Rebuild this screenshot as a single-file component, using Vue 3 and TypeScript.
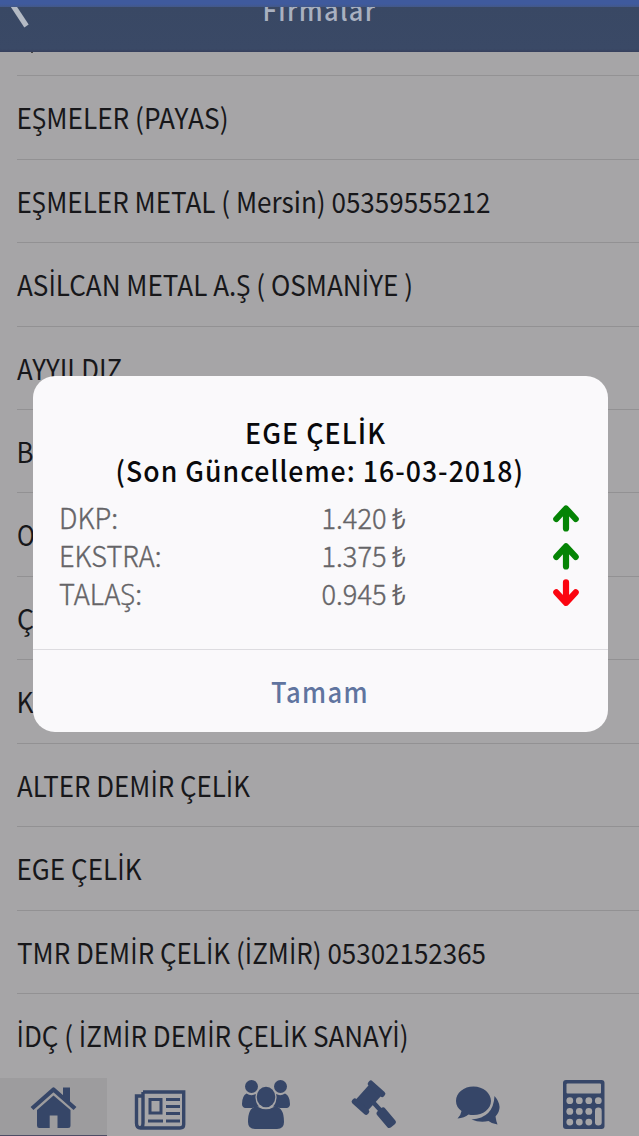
<script setup lang="ts">
interface Firm {
  name: string
  x: number
  width: number
}

interface Price {
  label: string
  labelWidth: number
  value: string
  up: boolean
}

const firms: Firm[] = [
  { name: 'EŞMELER (PAYAS)', x: 16.5, width: 212 },
  { name: 'EŞMELER METAL ( Mersin) 05359555212', x: 16.5, width: 474 },
  { name: 'ASİLCAN METAL A.Ş ( OSMANİYE )', x: 17, width: 396 },
  { name: 'AYYILDIZ', x: 17, width: 105 },
  { name: 'B', x: 16.5, width: 17 },
  { name: 'O', x: 17, width: 18 },
  { name: 'Ç', x: 17, width: 17 },
  { name: 'K', x: 16.5, width: 17 },
  { name: 'ALTER DEMİR ÇELİK', x: 17, width: 233 },
  { name: 'EGE ÇELİK', x: 16.5, width: 125 },
  { name: 'TMR DEMİR ÇELİK (İZMİR) 05302152365', x: 17, width: 469 },
  { name: 'İDÇ ( İZMİR DEMİR ÇELİK SANAYİ)', x: 16.5, width: 392 },
]

const prices: Price[] = [
  { label: 'DKP:', labelWidth: 59, value: '1.420', up: true },
  { label: 'EKSTRA:', labelWidth: 102.5, value: '1.375', up: true },
  { label: 'TALAŞ:', labelWidth: 83, value: '0.945', up: false },
]

const dialogTitle = 'EGE ÇELİK'

// The dotted capital İ is set from its own family, so runs are split around it.
const runs = (s: string): string[] => s.split(/(İ)/).filter((part) => part !== '')
</script>

<template>
  <div class="screen">
    <div class="status"></div>
    <header class="bar">
      <svg width="639" height="45" viewBox="0 7 639 45">
        <path d="M12 4 26.500 26" stroke="#b4bac4" stroke-width="5.200" fill="none" />
        <text x="262.500" y="21" class="title" textLength="114" lengthAdjust="spacingAndGlyphs">Firmalar</text>
      </svg>
    </header>

    <main class="list">
      <div class="stub"><i></i></div>
      <div v-for="firm in firms" :key="firm.name" class="row">
        <svg width="639" height="83" viewBox="0 0 639 83">
          <text :x="firm.x" y="52.600" :textLength="firm.width" lengthAdjust="spacingAndGlyphs"><tspan v-for="(part, i) in runs(firm.name)" :key="i" :class="{ dotted: part === 'İ' }">{{ part }}</tspan></text>
        </svg>
      </div>
    </main>

    <nav class="tabs">
      <div class="tab active">
        <svg width="107" height="58" viewBox="0 1078 107 58">
          <path d="M32 1108.500 53.500 1089.500 75 1108.500" fill="none" stroke="#364668" stroke-width="4.300" stroke-linejoin="round" />
          <path d="M63 1087.500H70V1103L63 1097Z" />
          <path d="M53.500 1095.500 70.500 1110V1125.500Q70.500 1128 68 1128H57.500V1115.500H49.700V1128H39.200Q37 1128 37 1125.500V1110Z" />
        </svg>
      </div>
      <div class="tab">
        <svg width="107" height="58" viewBox="107 1078 107 58">
          <g fill="none" stroke="#364668" stroke-width="3.400">
            <path d="M143 1092H183.700V1124.500Q183.700 1128 180 1128H140.500Q136.500 1128 136.500 1123V1096H143M143 1092V1123Q143 1128 139.500 1128" />
            <path d="M150 1099.500H161V1113H150ZM166 1099.500H180M166 1106.500H180M166 1113.500H180M166 1121H180M148 1121H163" stroke-width="3" />
          </g>
        </svg>
      </div>
      <div class="tab">
        <svg width="107" height="58" viewBox="213 1078 107 58">
          <circle cx="251.500" cy="1086.500" r="6.500" />
          <circle cx="280.500" cy="1086.500" r="6.500" />
          <path d="M246.500 1093.500Q251 1096.500 256 1094Q254.500 1102 259 1106.500Q254.500 1107 252 1108H245Q242 1107 242 1104Q242 1096 246.500 1093.500ZM285 1093.500Q280.500 1096.500 276 1094Q277.500 1102 273 1106.500Q277 1107 280 1108H287Q290 1107 290 1104Q290 1096 285 1093.500Z" />
          <ellipse cx="266" cy="1097" rx="10.400" ry="11.400" class="cut" />
          <ellipse cx="266" cy="1097" rx="9.300" ry="10.300" />
          <path d="M257 1106.500Q266 1112 275 1106.500Q284 1107 284 1122Q284 1129 277 1129H255Q248 1129 248 1122Q248 1107 257 1106.500Z" />
        </svg>
      </div>
      <div class="tab">
        <svg width="107" height="58" viewBox="319 1078 107 58">
          <g transform="translate(367.500 1097.700) rotate(-48)">
            <rect x="-12" y="-8.200" width="24" height="16.400" />
            <rect x="-15" y="-10.500" width="6" height="21" rx="2.400" />
            <rect x="9" y="-10.500" width="6" height="21" rx="2.400" />
          </g>
          <path d="M371 1101 381 1112" stroke="#364668" stroke-width="4.500" />
          <rect x="-10.500" y="-5.200" width="21" height="10.400" rx="2.800" transform="translate(385.200 1117.700) rotate(50)" />
        </svg>
      </div>
      <div class="tab">
        <svg width="107" height="58" viewBox="426 1078 107 58">
          <path d="M494.500 1096Q504 1107 495.500 1116.500Q496 1120.500 497.500 1124.500Q492 1124 488.500 1121Q480 1123 471.500 1119.500Q493.500 1118 494.500 1096Z" />
          <path d="M473.500 1086.500C463.800 1086.500 456 1092.700 456 1101Q456 1107 461.500 1111Q461 1115 457.500 1118.500Q464.500 1118 468.500 1114.500Q470.500 1115 473.500 1115C483.200 1115 491 1108.800 491 1101S483.200 1086.500 473.500 1086.500Z" />
        </svg>
      </div>
      <div class="tab">
        <svg width="107" height="58" viewBox="532 1078 107 58">
          <rect x="562" y="1080" width="41.500" height="49" rx="3" />
          <rect x="565.500" y="1083.500" width="34.500" height="10" rx="1" class="cut" />
          <g class="cut">
            <template v-for="r in 3" :key="r">
              <circle v-for="c in (r === 1 ? 4 : 3)" :key="c" :cx="559.3 + c * 9.5" :cy="1090 + r * 10.7" r="3.400" />
            </template>
            <rect x="594" y="1107.500" width="6.700" height="18" rx="3.200" />
          </g>
        </svg>
      </div>
    </nav>

    <section class="dialog">
      <svg width="575" height="273" viewBox="32.5 376 575 273">
        <g class="heading">
          <text x="244.500" y="444" textLength="141" lengthAdjust="spacingAndGlyphs"><tspan v-for="(part, i) in runs(dialogTitle)" :key="i" :class="{ dotted: part === 'İ' }">{{ part }}</tspan></text>
          <text x="115" y="481.500" textLength="408.500" lengthAdjust="spacingAndGlyphs">(Son Güncelleme: 16-03-2018)</text>
        </g>
        <g v-for="(p, i) in prices" :key="p.label" class="price" :transform="`translate(0 ${i * 37.9})`">
          <text x="58.500" y="529" :textLength="p.labelWidth" lengthAdjust="spacingAndGlyphs">{{ p.label }}</text>
          <text x="321" y="529" textLength="65" lengthAdjust="spacingAndGlyphs">{{ p.value }}</text>
          <text x="391.300" y="529" class="lira" textLength="14" lengthAdjust="spacingAndGlyphs">₺</text>
          <path
            :class="p.up ? 'up' : 'down'"
            :d="p.up ? 'M565.5 528.5V509M555.800 519 565.5 508.500 575.200 519' : 'M565.5 506.500V527M555.800 516.500 565.5 527 575.200 516.500'"
          />
        </g>
      </svg>
      <button type="button" class="ok">
        <svg width="575" height="83" viewBox="32.5 649 575 83">
          <text x="270.500" y="702.500" textLength="98" lengthAdjust="spacingAndGlyphs">Tamam</text>
        </svg>
      </button>
    </section>
  </div>
</template>

<style>
body {
  margin: 0;
  background: #a6a5a7;
}
</style>

<style scoped>
.screen {
  position: relative;
  width: 639px;
  height: 1136px;
  overflow: hidden;
  display: flex;
  flex-direction: column;
  background: #a6a5a7;
  font-family: "Noto Sans CJK SC", "Open Sans", sans-serif;
}
svg {
  display: block;
}
.status {
  height: 7px;
  flex: none;
  background: linear-gradient(#3f5a9d 4px, #435888);
}
.bar {
  height: 45px;
  flex: none;
  background: linear-gradient(#394864, #3a4966 42px, #363f5c);
}
.title {
  font-size: 28px;
  font-weight: 500;
  letter-spacing: 1.5px;
  fill: #a9b1c0;
}
.list {
  flex: 1;
  min-height: 0;
  overflow: hidden;
}
.stub {
  height: 23.2px;
  margin-left: 17px;
  border-bottom: 1px solid #939294;
}
.stub i {
  display: block;
  width: 2px;
  height: 1px;
  margin-left: 14px;
  background: #444;
}
.row {
  position: relative;
  height: 83.45px;
}
.row::after {
  content: "";
  position: absolute;
  left: 17px;
  right: 0;
  bottom: 0;
  height: 1px;
  background: #929193;
}
.row:last-child::after {
  display: none;
}
.row text {
  font-size: 28.5px;
  fill: #17171a;
}
.row .dotted {
  font-family: "Open Sans", sans-serif;
  font-size: 29.2px;
}
.tabs {
  height: 58px;
  flex: none;
  display: grid;
  grid-template-columns: repeat(6, 1fr);
  background: #a6a5a7;
  fill: #364668;
}
.tab {
  overflow: hidden;
}
.active {
  background: #9d9c9e;
  box-shadow: inset 0 -1px #4d4d65;
}
.cut {
  fill: #a6a5a7;
}
.dialog {
  position: absolute;
  left: 32.5px;
  top: 376px;
  width: 575px;
  height: 356px;
  border-radius: 22px;
  overflow: hidden;
  background: #faf9fb;
}
.heading {
  font-size: 28.5px;
  font-weight: 500;
  letter-spacing: 1.1px;
  fill: #09090b;
}
.heading .dotted {
  font-family: "Open Sans", sans-serif;
  font-size: 29.2px;
  font-weight: 600;
}
.price text {
  font-size: 28.5px;
  font-weight: 300;
  fill: #656467;
  stroke: #656467;
  stroke-width: 0.4px;
}
.price .lira {
  font-size: 29px;
  stroke: none;
}
.price path {
  fill: none;
  stroke-width: 6.2;
  stroke-linecap: round;
  stroke-linejoin: round;
}
.up {
  stroke: #058405;
}
.down {
  stroke: #fb0510;
}
.ok {
  display: block;
  width: 100%;
  height: 83px;
  padding: 0;
  border: 0;
  background: none;
  box-shadow: inset 0 1px #dddce0;
  font: inherit;
}
.ok text {
  font-size: 28px;
  font-weight: 500;
  letter-spacing: 1.5px;
  fill: #60749f;
}
</style>
